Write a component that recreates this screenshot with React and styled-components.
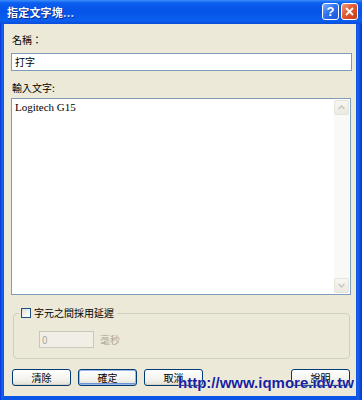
import React from "react";
import styled, { createGlobalStyle } from "styled-components";

const GlobalStyle = createGlobalStyle`
  html, body {
    margin: 0;
    padding: 0;
    background: #ffffff;
  }
  body {
    font-family: "Noto Sans CJK TC", "Liberation Sans", sans-serif;
  }
`;

const Window = styled.div`
  position: relative;
  width: 362px;
  height: 400px;
  display: flex;
  flex-direction: column;
  background: linear-gradient(to right, #0831d9 0px, #1662ec 2px, #0a55e6 4px, #0a55e6 356px, #1a5fe8 358px, #0836c8 362px);
  overflow: hidden;
`;

const TitleBar = styled.div`
  height: 24px;
  flex: none;
  display: flex;
  align-items: center;
  justify-content: space-between;
  padding: 0 4px 0 7px;
  background: linear-gradient(
    to bottom,
    #3c8dfb 0%,
    #0a5eef 12%,
    #0653e8 45%,
    #0a5ef0 85%,
    #0a4ed9 100%
  );
`;

const Title = styled.div`
  color: #ffffff;
  font-size: 11px;
  font-weight: bold;
  line-height: 14px;
  text-shadow: 1px 1px 0 #0b2a8c;
  letter-spacing: 0.2px;
`;

const Dots = styled.span`
  opacity: 0.75;
`;

const Controls = styled.div`
  display: flex;
  gap: 2px;
  margin-top: -1px;
`;

const CtrlButton = styled.div`
  width: 15px;
  height: 15px;
  border: 1px solid #ffffff;
  border-radius: 3px;
  display: flex;
  align-items: center;
  justify-content: center;
  color: #ffffff;
  font-family: "Liberation Sans", sans-serif;
  font-weight: bold;
  font-size: 13px;
  line-height: 1;
  background: ${({ $close }) =>
    $close
      ? "linear-gradient(135deg, #f09a7c 0%, #e2582f 45%, #c63c16 100%)"
      : "linear-gradient(135deg, #7fb0ff 0%, #2f72f0 45%, #1c55d8 100%)"};
`;

const Client = styled.div`
  flex: 1;
  margin: 0 6px 4px 4px;
  background: #ece9d8;
  padding: 10px 4px 0 7px;
  display: flex;
  flex-direction: column;
`;

const Label = styled.div`
  font-size: 10px;
  line-height: 12px;
  color: #000000;
  margin: ${({ $top }) => $top || 0}px 0 0 1px;
`;

const TextInput = styled.div`
  margin-top: 7px;
  height: 16px;
  border: 1px solid #7f9db9;
  background: #ffffff;
  padding: 0 3px;
  font-size: 10px;
  line-height: 16px;
  color: #000000;
`;

const TextArea = styled.div`
  margin-top: 4px;
  margin-right: 1px;
  height: 195px;
  border: 1px solid #7f9db9;
  background: #ffffff;
  display: flex;
`;

const AreaText = styled.div`
  flex: 1;
  padding: 2px 3px;
  font-family: "Liberation Serif", serif;
  font-size: 11px;
  line-height: 13px;
  color: #000000;
`;

const ScrollBar = styled.div`
  width: 15px;
  margin: 1px;
  background: #f9f9f6;
  display: flex;
  flex-direction: column;
  justify-content: space-between;
`;

const ScrollButton = styled.div`
  height: 15px;
  border: 1px solid #e6e4da;
  border-radius: 2px;
  box-sizing: border-box;
  background: linear-gradient(to bottom, #f7f6f1, #ebeae2);
  display: flex;
  align-items: center;
  justify-content: center;
`;

const Group = styled.fieldset`
  margin: 12px 2px 0 2px;
  padding: 12px 8px 10px 5px;
  border: 1px solid #d0d0bf;
  border-radius: 4px;
  min-width: 0;
`;

const Legend = styled.legend`
  margin-left: 0;
  padding: 0 3px 0 2px;
  display: flex;
  align-items: center;
  gap: 3px;
  font-size: 10px;
  line-height: 12px;
  color: #000000;
`;

const CheckBox = styled.span`
  width: 8px;
  height: 8px;
  border: 1px solid #1c5180;
  background: linear-gradient(135deg, #dcdcd7 0%, #f4f4f0 60%, #ffffff 100%);
`;

const DelayRow = styled.div`
  display: flex;
  align-items: center;
  gap: 6px;
  padding-left: 20px;
`;

const DisabledInput = styled.div`
  width: 49px;
  height: 15px;
  border: 1px solid #c9c7ba;
  background: #f1efe5;
  padding: 0 2px;
  font-size: 10px;
  line-height: 15px;
  color: #aca899;
`;

const Unit = styled.span`
  font-size: 10px;
  color: #aca899;
`;

const ButtonRow = styled.div`
  margin: 10px 2px 0 1px;
  display: flex;
  gap: 7px;
`;

const Button = styled.div`
  width: 57px;
  height: 15px;
  border: 1px solid #003c74;
  border-radius: 3px;
  background: linear-gradient(to bottom, #ffffff 0%, #f4f3ee 60%, #e3e0d6 100%);
  box-shadow: ${({ $default }) =>
    $default ? "inset 0 0 0 1px #9fb8e8, inset 0 -1px 0 1px #6f93d8" : "inset 0 -1px 0 #d6d0c5"};
  font-size: 10px;
  line-height: 15px;
  text-align: center;
  color: #000000;
  margin-left: ${({ $push }) => ($push ? "auto" : "0")};
`;

const Watermark = styled.div`
  position: absolute;
  left: 178px;
  top: 374px;
  font-family: "Liberation Sans", sans-serif;
  font-weight: bold;
  font-size: 15px;
  line-height: 18px;
  color: #16229e;
  text-shadow: 0 0 1px #ffffff;
  white-space: nowrap;
`;

const Chevron = ({ up }) => (
  <svg width="7" height="5" viewBox="0 0 7 5">
    <path
      d={up ? "M0.5 4 L3.5 1 L6.5 4" : "M0.5 1 L3.5 4 L6.5 1"}
      fill="none"
      stroke="#c9c7bb"
      strokeWidth="1.5"
    />
  </svg>
);

export default function App() {
  return (
    <>
      <GlobalStyle />
      <Window>
        <TitleBar>
          <Title>
            指定文字塊<Dots>...</Dots>
          </Title>
          <Controls>
            <CtrlButton>?</CtrlButton>
            <CtrlButton $close>
              <svg width="9" height="9" viewBox="0 0 9 9">
                <path d="M1 1 L8 8 M8 1 L1 8" stroke="#ffffff" strokeWidth="1.8" />
              </svg>
            </CtrlButton>
          </Controls>
        </TitleBar>
        <Client>
          <Label>名稱：</Label>
          <TextInput>打字</TextInput>
          <Label $top={11}>輸入文字:</Label>
          <TextArea>
            <AreaText>Logitech G15</AreaText>
            <ScrollBar>
              <ScrollButton>
                <Chevron up />
              </ScrollButton>
              <ScrollButton>
                <Chevron />
              </ScrollButton>
            </ScrollBar>
          </TextArea>
          <Group>
            <Legend>
              <CheckBox />
              字元之間採用延遲
            </Legend>
            <DelayRow>
              <DisabledInput>0</DisabledInput>
              <Unit>毫秒</Unit>
            </DelayRow>
          </Group>
          <ButtonRow>
            <Button>清除</Button>
            <Button $default>確定</Button>
            <Button>取消</Button>
            <Button $push>說明</Button>
          </ButtonRow>
        </Client>
        <Watermark>http://www.iqmore.idv.tw</Watermark>
      </Window>
    </>
  );
}
